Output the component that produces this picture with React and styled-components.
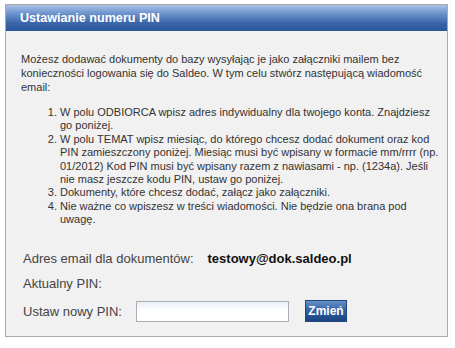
import React, { useState } from "react";
import styled, { createGlobalStyle } from "styled-components";

const GlobalStyle = createGlobalStyle`
  html, body {
    margin: 0;
    padding: 0;
    background: #ffffff;
  }
  body {
    font-family: "Liberation Sans", Arial, sans-serif;
  }
`;

const Page = styled.div`
  padding: 4px 0 0 5px;
`;

const Panel = styled.div`
  width: 443px;
  box-sizing: border-box;
  border: 1px solid #a9a9a9;
  background: #f1f1f1;
`;

const Header = styled.div`
  height: 26px;
  line-height: 26px;
  padding-left: 14px;
  background: linear-gradient(#a9c3e7 0%, #7196cf 30%, #3a65a8 70%, #2b5699 100%);
  color: #ffffff;
  font-size: 12.6px;
  font-weight: bold;
`;

const Body = styled.div`
  padding: 21px 15px 12px 15px;
  color: #333333;
  font-size: 11px;
`;

const Intro = styled.p`
  margin: 0 0 12px 0;
  line-height: 14px;
`;

const Steps = styled.ol`
  margin: 0;
  padding-left: 39px;
  line-height: 13.4px;
  white-space: nowrap;
`;

const Form = styled.div`
  margin-top: 19px;
  padding-left: 2px;
  font-size: 13px;
  color: #444444;
`;

const Row = styled.div`
  display: flex;
  align-items: center;
  height: 25px;
  gap: 14px;
  margin-top: ${(props) => (props.$spaced ? "3px" : "0")};
`;

const Email = styled.span`
  font-size: 13px;
  font-weight: bold;
  color: #111111;
`;

const PinInput = styled.input`
  width: 153px;
  height: 21px;
  box-sizing: border-box;
  border: 1px solid #a7aeb8;
  background: linear-gradient(#e9eef4, #ffffff 45%);
  outline: none;
  padding: 0 3px;
  font-family: inherit;
  font-size: 12px;
`;

const Button = styled.button`
  width: 42px;
  height: 22px;
  margin-left: 2px;
  padding: 0;
  border: 1px solid #21467e;
  background: linear-gradient(#6690c8 0%, #3463a4 45%, #1a427f 100%);
  color: #ffffff;
  font-family: "Liberation Sans", Arial, sans-serif;
  font-size: 12px;
  font-weight: bold;
  cursor: pointer;
`;

const App = () => {
  const [pin, setPin] = useState("");

  return (
    <Page>
      <GlobalStyle />
      <Panel>
        <Header>Ustawianie numeru PIN</Header>
        <Body>
          <Intro>
            Możesz dodawać dokumenty do bazy wysyłając je jako załączniki mailem bez
            konieczności logowania się do Saldeo. W tym celu stwórz następującą
            wiadomość email:
          </Intro>
          <Steps>
            <li>
              W polu ODBIORCA wpisz adres indywidualny dla twojego konta. Znajdziesz
              <br />
              go poniżej.
            </li>
            <li>
              W polu TEMAT wpisz miesiąc, do którego chcesz dodać dokument oraz kod
              <br />
              PIN zamieszczony poniżej. Miesiąc musi być wpisany w formacie mm/rrrr (np.
              <br />
              01/2012) Kod PIN musi być wpisany razem z nawiasami - np. (1234a). Jeśli
              <br />
              nie masz jeszcze kodu PIN, ustaw go poniżej.
            </li>
            <li>Dokumenty, które chcesz dodać, załącz jako załączniki.</li>
            <li>
              Nie ważne co wpiszesz w treści wiadomości. Nie będzie ona brana pod
              <br />
              uwagę.
            </li>
          </Steps>
          <Form>
            <Row>
              <span>Adres email dla dokumentów:</span>
              <Email>testowy@dok.saldeo.pl</Email>
            </Row>
            <Row>
              <span>Aktualny PIN:</span>
            </Row>
            <Row $spaced>
              <span>Ustaw nowy PIN:</span>
              <PinInput value={pin} onChange={(e) => setPin(e.target.value)} />
              <Button>Zmień</Button>
            </Row>
          </Form>
        </Body>
      </Panel>
    </Page>
  );
};

export default App;
